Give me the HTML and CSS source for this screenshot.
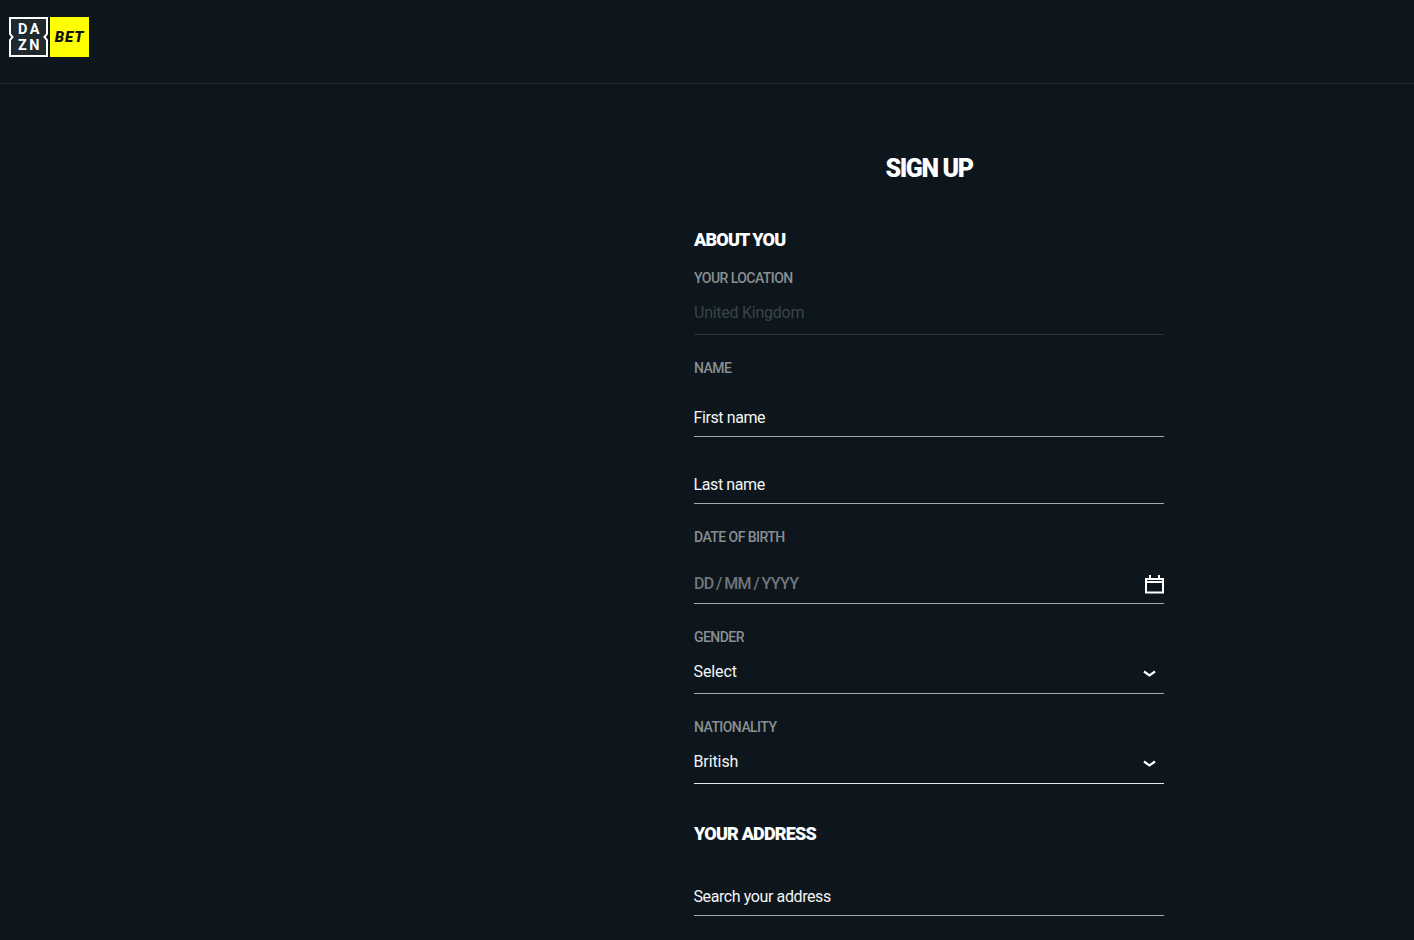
FILE: index.html
```html
<!DOCTYPE html>
<html lang="en">
<head>
<meta charset="utf-8">
<title>Sign up</title>
<link rel="stylesheet" href="styles.css">
</head>
<body>
<header class="topbar">
  <div class="logo">
    <div class="logo-dazn">
      <svg class="logo-frame" width="39" height="40" viewBox="0 0 39 40">
        <path d="M1 1H38V17L35.5 20L38 23V39H1V23L3.5 20L1 17Z" fill="#20292e" stroke="#fff" stroke-width="2"/>
      </svg>
      <div class="logo-text">DA</div>
      <div class="logo-text">ZN</div>
    </div>
    <div class="logo-bet">BET</div>
  </div>
</header>
<main class="page">
  <form class="form">
    <h1 class="title">SIGN UP</h1>
    <h2 class="section section-about">ABOUT YOU</h2>
    <div class="label label-first">YOUR LOCATION</div>
    <div class="field field-disabled h48"><span>United Kingdom</span></div>
    <div class="label">NAME</div>
    <div class="field h60"><span>First name</span></div>
    <div class="field h67"><span>Last name</span></div>
    <div class="label">DATE OF BIRTH</div>
    <div class="field field-placeholder h58">
      <span>DD / MM / YYYY</span>
      <svg class="icon-cal" width="19" height="19" viewBox="0 0 19 19">
        <path d="M1 4H18V17.5H1ZM1 7H18M5 0V4M14 0V4" fill="none" stroke="#fff" stroke-width="2"/>
      </svg>
    </div>
    <div class="label">GENDER</div>
    <div class="field field-select h48">
      <span>Select</span>
      <svg class="icon-chev" width="13" height="8" viewBox="0 0 13 8"><path d="M1 1.5L6.5 5.5L12 1.5" fill="none" stroke="#fff" stroke-width="2.2"/></svg>
    </div>
    <div class="label">NATIONALITY</div>
    <div class="field field-select field-bright h48">
      <span>British</span>
      <svg class="icon-chev" width="13" height="8" viewBox="0 0 13 8"><path d="M1 1.5L6.5 5.5L12 1.5" fill="none" stroke="#fff" stroke-width="2.2"/></svg>
    </div>
    <h2 class="section section-address">YOUR ADDRESS</h2>
    <div class="field h70"><span>Search your address</span></div>
  </form>
</main>
</body>
</html>
```
FILE: styles.css
```css
* { box-sizing: border-box; }
html, body { margin: 0; height: 100%; }
body {
  background: #0c161c;
  color: #fff;
  font-family: Roboto, "Liberation Sans", sans-serif;
  overflow: hidden;
}
.topbar {
  height: 84px;
  padding: 17px 0 0 9px;
  border-bottom: 1px solid #262e33;
}
.logo { display: flex; gap: 2px; }
.logo-dazn {
  position: relative;
  width: 39px;
  height: 40px;
  padding: 5px 0 0 9px;
}
.logo-frame { position: absolute; left: 0; top: 0; }
.logo-text {
  position: relative;
  font-size: 14.5px;
  line-height: 16px;
  height: 16px;
  font-weight: 700;
  letter-spacing: 2.5px;
}
.logo-bet {
  width: 39px;
  height: 40px;
  background: #ffff00;
  color: #111;
  font: italic 900 15px/41px Roboto, sans-serif;
  letter-spacing: 0.8px;
  text-align: center;
}
.page {
  display: grid;
  grid-template-columns: 694px 470px;
}
.form { grid-column: 2; }
.title {
  margin: 73px 0 0;
  font-size: 25px;
  line-height: 24px;
  font-weight: 900;
  text-align: center;
  letter-spacing: -1.4px;
}
.section {
  margin: 0;
  font-size: 18px;
  line-height: 24px;
  font-weight: 900;
  letter-spacing: -0.8px;
}
.section-about { margin-top: 47px; word-spacing: -0.5px; }
.section-address { margin-top: 38px; }
.label {
  margin-top: 24px;
  font-size: 14px;
  line-height: 18px;
  font-weight: 500;
  color: #8b8f91;
  letter-spacing: -0.55px;
}
.label-first { margin-top: 17px; }
.field {
  display: flex;
  align-items: flex-end;
  justify-content: space-between;
  padding-bottom: 8px;
  border-bottom: 1px solid #a8abad;
  font-size: 16px;
  line-height: 20px;
  letter-spacing: -0.4px;
  color: #f5f5f5;
}
.field span { margin-left: -0.5px; }
.h48 { height: 48px; padding-bottom: 11px; }
.h58 { height: 58px; padding-bottom: 9px; }
.h60 { height: 60px; }
.h67 { height: 67px; }
.h70 { height: 70px; }
.field-disabled { color: #3b4449; border-bottom-color: #2a3237; }
.field-disabled span { margin-left: 0; letter-spacing: -0.25px; }
.field-placeholder { color: #73767a; font-weight: 500; letter-spacing: -0.65px; word-spacing: -0.8px; }
.field-placeholder span { margin-left: 0; }
.field-select { letter-spacing: -0.1px; }
.field-bright { border-bottom-color: #e6e7e8; }
.icon-cal { display: block; }
.icon-chev { display: block; margin: 0 8px 4px 0; }
```
